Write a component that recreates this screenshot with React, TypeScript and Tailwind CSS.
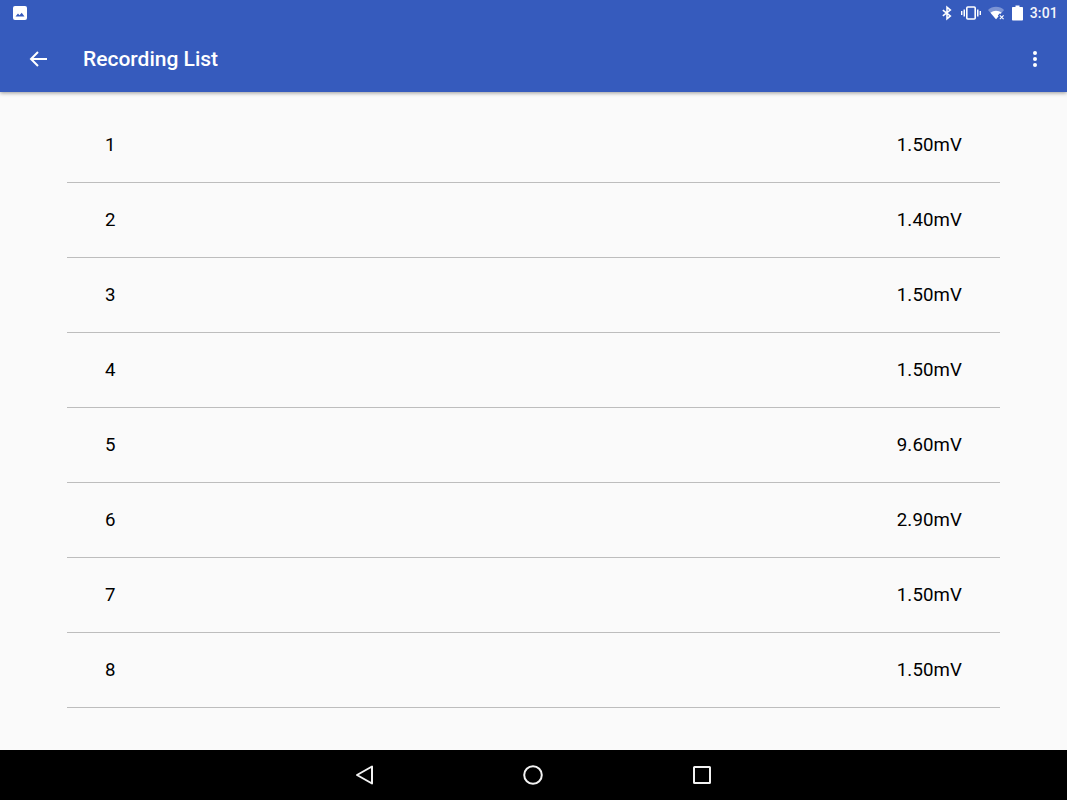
const recordings = [
  { id: 1, value: "1.50mV" },
  { id: 2, value: "1.40mV" },
  { id: 3, value: "1.50mV" },
  { id: 4, value: "1.50mV" },
  { id: 5, value: "9.60mV" },
  { id: 6, value: "2.90mV" },
  { id: 7, value: "1.50mV" },
  { id: 8, value: "1.50mV" },
];

function StatusBar() {
  return (
    <div className="flex h-[25px] items-center justify-between pl-[13px] pr-[9px]">
      <svg width="14" height="14" viewBox="0 0 14 14">
        <rect width="14" height="14" rx="2" fill="#fff" />
        <path d="M2.5 10.5 L5 7.5 L6.5 9.2 L8.7 6.8 L11.5 10.5 Z" fill="#365bbd" />
      </svg>
      <div className="flex items-center">
        <svg width="10" height="16" viewBox="0 0 12 16" fill="none" stroke="#fff" strokeWidth="1.9" className="mr-[9px]">
          <path d="M1 4.5 L10 11.5 L6 15 V1 L10 4.5 L1 11.5" />
        </svg>
        <svg width="20" height="14" viewBox="0 0 20 14" className="mr-[7px]">
          <rect x="5.8" y="1" width="8.4" height="12" rx="1" fill="none" stroke="#fff" strokeWidth="1.6" />
          <rect x="2.5" y="3.5" width="1.5" height="7" fill="#fff" />
          <rect x="16" y="3.5" width="1.5" height="7" fill="#fff" />
          <rect x="0" y="5" width="1.4" height="4" fill="#fff" />
          <rect x="18.6" y="5" width="1.4" height="4" fill="#fff" />
        </svg>
        <svg width="17" height="14" viewBox="0 0 18 14" className="mr-[7px]">
          <path d="M0 3.8 C4.5 -0.6 12.5 -0.6 17 3.8 L8.5 13.5 Z" fill="#fff" fillOpacity="0.35" />
          <path d="M2.6 6.8 C5.8 3.8 11.2 3.8 14.4 6.8 L8.5 13.5 Z" fill="#fff" />
          <path d="M11.5 8.5 L16.5 13.5 M16.5 8.5 L11.5 13.5" stroke="#365bbd" strokeWidth="3.2" />
          <path d="M12.5 9.5 L16.5 13.5 M16.5 9.5 L12.5 13.5" stroke="#fff" strokeWidth="1.2" />
        </svg>
        <svg width="11" height="16" viewBox="0 0 11 15" className="mr-[7px]">
          <path d="M3.5 0 H7.5 V1.5 H10.2 A.8 .8 0 0 1 11 2.3 V14.2 A.8 .8 0 0 1 10.2 15 H.8 A.8 .8 0 0 1 0 14.2 V2.3 A.8 .8 0 0 1 .8 1.5 H3.5 Z" fill="#fff" />
        </svg>
        <span className="text-[14px] font-medium leading-none tracking-[0.2px] text-[#f3f5fb]">3:01</span>
      </div>
    </div>
  );
}

function AppBar() {
  return (
    <div className="flex h-[67px] items-center pl-[29px] pr-[29px]">
      <svg width="18" height="18" viewBox="0 0 18 18" fill="none" stroke="#fff" strokeWidth="2">
        <path d="M18 9 H2 M9 2 L2 9 L9 16" />
      </svg>
      <h1 className="ml-[36px] flex-1 pt-[2px] text-[21px] font-medium leading-none text-white">Recording List</h1>
      <svg width="6" height="18" viewBox="0 0 6 18" fill="#fff">
        <circle cx="3" cy="3" r="2" />
        <circle cx="3" cy="9" r="2" />
        <circle cx="3" cy="15" r="2" />
      </svg>
    </div>
  );
}

function NavBar() {
  return (
    <div className="flex h-[50px] items-center justify-center bg-black pr-[2px]">
      <div className="flex w-[356px] items-center justify-between">
        <svg width="18" height="20" viewBox="0 0 18 20" fill="none" stroke="#f2f2f2" strokeWidth="2" strokeLinejoin="round">
          <path d="M17 1.5 V18.5 L2 10 Z" />
        </svg>
        <svg width="20" height="20" viewBox="0 0 20 20" fill="none" stroke="#f2f2f2" strokeWidth="2">
          <circle cx="10" cy="10" r="8.8" />
        </svg>
        <svg width="18" height="18" viewBox="0 0 18 18" fill="none" stroke="#f2f2f2" strokeWidth="2" strokeLinejoin="round">
          <rect x="1" y="1" width="16" height="16" rx="0.5" />
        </svg>
      </div>
    </div>
  );
}

export default function App() {
  return (
    <div className="flex h-[800px] flex-col bg-[#fafafa] font-['Roboto',sans-serif]">
      <header className="relative z-10 bg-[#365bbd] shadow-[0_1px_4px_rgba(0,0,0,0.4)]">
        <StatusBar />
        <AppBar />
      </header>
      <main className="flex-1 px-[67px] pt-4">
        <ul className="w-[933px]">
          {recordings.map((r) => (
            <li
              key={r.id}
              className="flex h-[75px] items-center justify-between border-b border-[#bdbdbd] pb-[1px] pl-[38px] pr-[38px] text-[18.67px] text-black"
            >
              <span>{r.id}</span>
              <span className="tracking-[0.1px]">{r.value}</span>
            </li>
          ))}
        </ul>
      </main>
      <NavBar />
    </div>
  );
}
